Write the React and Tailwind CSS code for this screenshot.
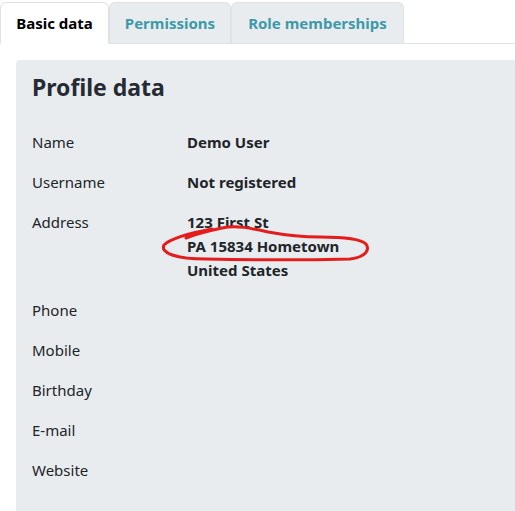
import React from "react";

function App() {
  /* Profile rows */
  const rows = [
    { label: "Name", value: ["Demo User"] },
    { label: "Username", value: ["Not registered"] },
    {
      label: "Address",
      value: ["123 First St", "PA 15834 Hometown", "United States"],
    },
    { label: "Phone", value: [] },
    { label: "Mobile", value: [] },
    { label: "Birthday", value: [] },
    { label: "E-mail", value: [] },
    { label: "Website", value: [] },
  ];

  return (
    <div className="relative w-[515px] h-[511px] overflow-hidden bg-white font-['Noto_Sans',sans-serif] text-[15px] text-[#212529]">
      {/* Tabs */}
      <div className="flex pt-[2px] border-b border-[#dee2e6]">
        <div className="-mb-px w-[109px] h-[42px] flex items-center justify-center bg-white border border-b-white border-[#dee2e6] rounded-t-md font-bold text-black">
          Basic data
        </div>
        <div className="w-[122px] h-[41px] flex items-center justify-center bg-[#e9ecef] border border-b-0 border-[#dee2e6] rounded-t-md font-bold text-[#3d9aa8]">
          Permissions
        </div>
        <div className="w-[173px] h-[41px] flex items-center justify-center bg-[#e9ecef] border border-b-0 border-[#dee2e6] rounded-t-md font-bold text-[#3d9aa8]">
          Role memberships
        </div>
      </div>

      {/* Panel */}
      <div className="mt-4 ml-4 h-[500px] bg-[#e9ecef] rounded-tl pl-4 pt-[13px]">
        <h2 className="text-[23px] leading-[29px] font-bold text-[#252a33]">
          Profile data
        </h2>

        <div className="mt-7 flex flex-col gap-4">
          {rows.map((row, index) => (
            <div key={index} className="flex leading-6">
              <div className="w-[155px] shrink-0">{row.label}</div>
              <div className="font-bold">
                {row.value.map((line, i) => (
                  <div key={i}>{line}</div>
                ))}
              </div>
            </div>
          ))}
        </div>
      </div>

      {/* Hand-drawn mark */}
      <svg
        className="absolute left-0 top-0 pointer-events-none"
        width="515"
        height="511"
        viewBox="0 0 515 511"
      >
        <path
          d="M212 229 C196 232 172 237 164 245 C160 253 176 259 206 259 C250 260 310 260 350 259 C366 257 370 250 366 244 C360 238 340 237 320 237 C300 237 290 236 268 232 C250 228 236 225 222 228 C208 231 196 234 186 238"
          fill="none"
          stroke="#e41c1c"
          strokeWidth="3"
          strokeLinecap="round"
          strokeLinejoin="round"
        />
      </svg>
    </div>
  );
}

export default App;
